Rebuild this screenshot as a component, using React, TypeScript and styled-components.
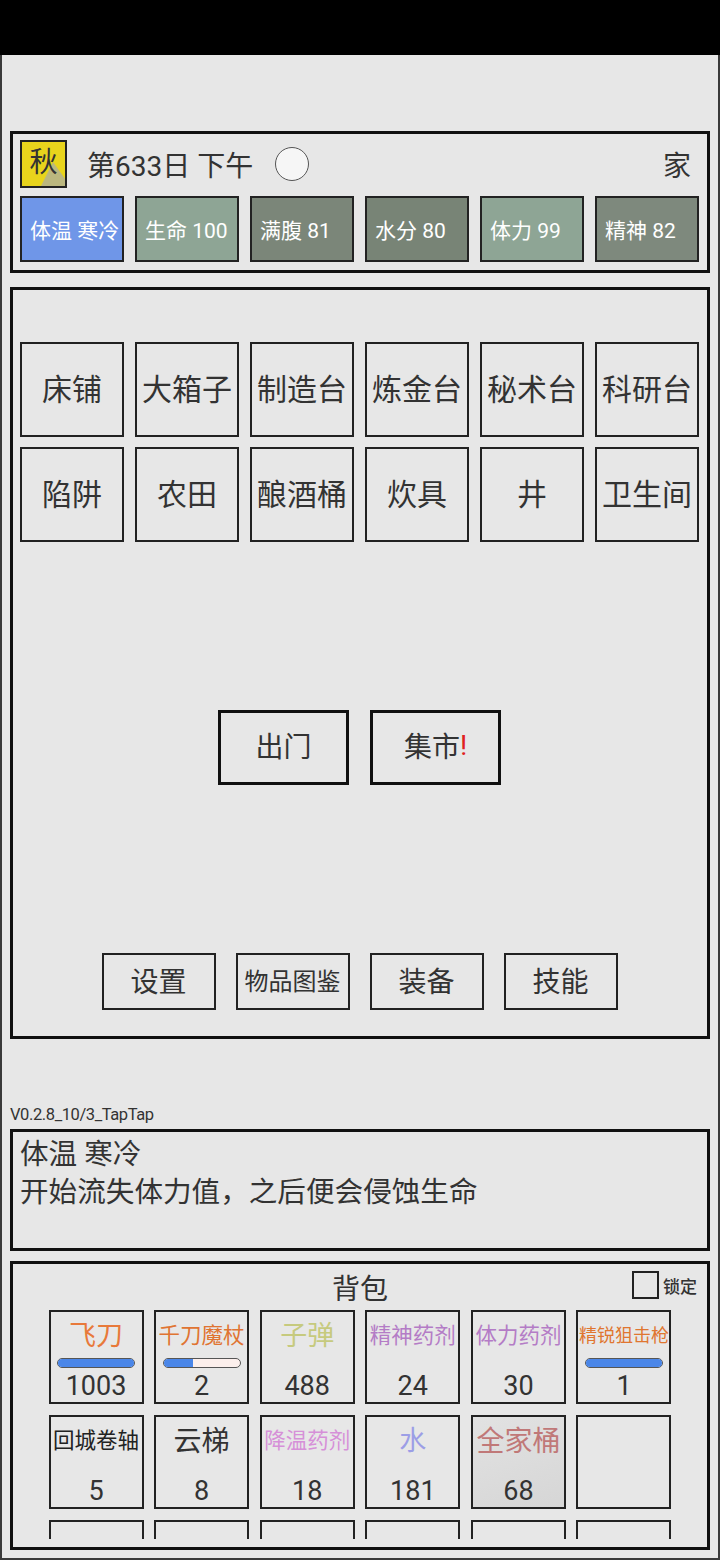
import * as React from 'react';
import styled, { createGlobalStyle } from 'styled-components';

const GlobalStyle = createGlobalStyle`
    html, body {
        margin: 0;
        padding: 0;
        background: #e7e7e7;
    }
    body {
        font-family: Roboto, "Noto Sans CJK SC", sans-serif;
        color: #333;
    }
    * {
        box-sizing: border-box;
    }
`;

const Screen = styled.div`
    width: 720px;
    height: 1560px;
    display: flex;
    flex-direction: column;
    background: #e7e7e7;
    overflow: hidden;
`;

const StatusBar = styled.div`
    height: 55px;
    flex-shrink: 0;
    background: #000;
`;

const Frame = styled.div`
    flex: 1;
    display: flex;
    flex-direction: column;
    border: 2px solid #3a3a3a;
    border-top: none;
    padding: 0 8px;
`;

const Panel = styled.section<{ $h: number; $mt: number }>`
    flex-shrink: 0;
    height: ${p => p.$h}px;
    margin-top: ${p => p.$mt}px;
    border: 3px solid #111;
    display: flex;
    flex-direction: column;
`;

/* ---- header: season, day, stats ---- */

const HeaderPanel = styled(Panel)`
    padding: 6px 8px 0 7px;
`;

const TopRow = styled.div`
    height: 48px;
    display: flex;
    align-items: center;
`;

const Season = styled.div`
    position: relative;
    width: 47px;
    height: 48px;
    border: 2px solid #222;
    background: #e8d41c;
    font-size: 28px;
    line-height: 42px;
    text-align: center;
    color: #333;
    overflow: hidden;
`;

const SeasonMark = styled.div`
    position: absolute;
    right: 0;
    bottom: 0;
    width: 24px;
    height: 24px;
    background: #bbb77f;
    clip-path: polygon(0 100%, 50% 0, 100% 70%, 100% 100%);
`;

const SeasonLabel = styled.span`
    position: relative;
`;

const DayText = styled.div`
    margin-left: 20px;
    font-size: 28px;
`;

const Sun = styled.div`
    margin-left: 22px;
    width: 34px;
    height: 34px;
    border-radius: 50%;
    border: 1.5px solid #555;
    background: #f6f6f6;
`;

const Place = styled.div`
    margin-left: auto;
    margin-right: 8px;
    font-size: 28px;
`;

const StatRow = styled.div`
    margin-top: 8px;
    display: flex;
    gap: 11px;
`;

const StatBox = styled.div<{ $bg: string }>`
    width: 104px;
    height: 66px;
    border: 2px solid #222;
    background: ${p => p.$bg};
    color: #fff;
    font-size: 21px;
    display: flex;
    align-items: center;
    padding-left: 8px;
    white-space: nowrap;
`;

/* ---- facilities ---- */

const FacilityPanel = styled(Panel)`
    padding: 52px 8px 26px 7px;
`;

const FacilityGrid = styled.div`
    display: grid;
    grid-template-columns: repeat(6, 104px);
    column-gap: 11px;
    row-gap: 10px;
`;

const Facility = styled.div`
    height: 95px;
    border: 2px solid #222;
    font-size: 30px;
    display: flex;
    align-items: center;
    justify-content: center;
    padding-bottom: 5px;
    white-space: nowrap;
`;

const Middle = styled.div`
    flex: 1;
    display: flex;
    align-items: center;
    justify-content: center;
    gap: 21px;
`;

const BigButton = styled.div`
    width: 131px;
    height: 75px;
    border: 3px solid #111;
    font-size: 28px;
    display: flex;
    align-items: center;
    justify-content: center;
    padding-bottom: 5px;
`;

const Alert = styled.span`
    color: #e02020;
`;

const MenuRow = styled.div`
    display: flex;
    justify-content: center;
    gap: 20px;
`;

const MenuButton = styled.div<{ $fs?: number }>`
    width: 114px;
    height: 57px;
    border: 2px solid #222;
    font-size: ${p => p.$fs ?? 28}px;
    display: flex;
    align-items: center;
    justify-content: center;
    padding-bottom: 4px;
    white-space: nowrap;
`;

/* ---- version + message log ---- */

const Version = styled.div`
    margin-top: 67px;
    height: 17px;
    font-size: 16.5px;
    line-height: 17px;
    color: #333;
    letter-spacing: -0.4px;
`;

const MessagePanel = styled(Panel)`
    padding: 3px 7px;
    font-size: 28.6px;
    line-height: 38px;
`;

/* ---- backpack ---- */

const BagPanel = styled(Panel)``;

const BagHeader = styled.div`
    height: 46px;
    display: grid;
    grid-template-columns: 1fr auto 1fr;
    align-items: center;
`;

const BagTitle = styled.div`
    grid-column: 2;
    font-size: 28px;
`;

const Lock = styled.label`
    justify-self: end;
    display: flex;
    align-items: center;
    gap: 4px;
    margin: -4px 10px 0 0;
    font-size: 17px;
    font-weight: 500;
`;

const LockBox = styled.span`
    width: 27px;
    height: 28px;
    border: 2px solid #222;
`;

const BagView = styled.div`
    height: 229px;
    overflow: hidden;
`;

const BagGrid = styled.div`
    display: grid;
    grid-template-columns: repeat(6, 95px);
    column-gap: 10.6px;
    row-gap: 11px;
    justify-content: center;
`;

const Cell = styled.div<{ $hl?: boolean }>`
    height: 94px;
    border: 2px solid #222;
    display: flex;
    flex-direction: column;
    align-items: center;
    background: ${p => (p.$hl ? 'linear-gradient(160deg, #e2e2e2, #d6d6d6)' : 'transparent')};
`;

const ItemName = styled.div<{ $color: string; $fs: number }>`
    height: 44px;
    display: flex;
    align-items: center;
    justify-content: center;
    font-size: ${p => p.$fs}px;
    color: ${p => p.$color};
    white-space: nowrap;
`;

const BarSlot = styled.div`
    height: 13px;
    padding-top: 3px;
`;

const Bar = styled.div`
    width: 78px;
    height: 10px;
    border: 1px solid #555;
    border-radius: 5px;
    background: #fcefec;
    overflow: hidden;
`;

const BarFill = styled.div`
    height: 100%;
    background: #4a86e8;
`;

const Count = styled.div`
    flex: 1;
    display: flex;
    align-items: center;
    padding-top: 2px;
    font-size: 27px;
`;

type Item = {
    name?: string;
    color?: string;
    fs?: number;
    bar?: number;
    count?: number;
    hl?: boolean;
};

const stats = [
    { label: '体温 寒冷', bg: '#6f96e8' },
    { label: '生命 100', bg: '#8ea595' },
    { label: '满腹 81', bg: '#7b8679' },
    { label: '水分 80', bg: '#788476' },
    { label: '体力 99', bg: '#8ea595' },
    { label: '精神 82', bg: '#7e897d' },
];

const facilities = [
    '床铺', '大箱子', '制造台', '炼金台', '秘术台', '科研台',
    '陷阱', '农田', '酿酒桶', '炊具', '井', '卫生间',
];

const items: Item[] = [
    { name: '飞刀', color: '#e8793a', fs: 27, bar: 1, count: 1003 },
    { name: '千刀魔杖', color: '#e07432', fs: 21.5, bar: 0.39, count: 2 },
    { name: '子弹', color: '#c6ca7e', fs: 27, count: 488 },
    { name: '精神药剂', color: '#b47cc6', fs: 21.5, count: 24 },
    { name: '体力药剂', color: '#b47cc6', fs: 21.5, count: 30 },
    { name: '精锐狙击枪', color: '#e07630', fs: 18, bar: 1, count: 1 },
    { name: '回城卷轴', color: '#222', fs: 21.5, count: 5 },
    { name: '云梯', color: '#333', fs: 28, count: 8 },
    { name: '降温药剂', color: '#d690d8', fs: 21.5, count: 18 },
    { name: '水', color: '#9c9ee6', fs: 27, count: 181 },
    { name: '全家桶', color: '#c07878', fs: 28, count: 68, hl: true },
    {}, {}, {}, {}, {}, {}, {},
];

const App = () => {
    return (
        <React.Fragment>
            <GlobalStyle />
            <Screen>
                <StatusBar />
                <Frame>
                    <HeaderPanel $h={142} $mt={76}>
                        <TopRow>
                            <Season>
                                <SeasonMark />
                                <SeasonLabel>秋</SeasonLabel>
                            </Season>
                            <DayText>第633日 下午</DayText>
                            <Sun />
                            <Place>家</Place>
                        </TopRow>
                        <StatRow>
                            {stats.map(s => (
                                <StatBox key={s.label} $bg={s.bg}>{s.label}</StatBox>
                            ))}
                        </StatRow>
                    </HeaderPanel>

                    <FacilityPanel $h={752} $mt={14}>
                        <FacilityGrid>
                            {facilities.map(f => (
                                <Facility key={f}>{f}</Facility>
                            ))}
                        </FacilityGrid>
                        <Middle>
                            <BigButton>出门</BigButton>
                            <BigButton>集市<Alert>!</Alert></BigButton>
                        </Middle>
                        <MenuRow>
                            <MenuButton>设置</MenuButton>
                            <MenuButton $fs={24}>物品图鉴</MenuButton>
                            <MenuButton>装备</MenuButton>
                            <MenuButton>技能</MenuButton>
                        </MenuRow>
                    </FacilityPanel>

                    <Version>V0.2.8_10/3_TapTap</Version>

                    <MessagePanel $h={122} $mt={6}>
                        <div>体温 寒冷</div>
                        <div>开始流失体力值，之后便会侵蚀生命</div>
                    </MessagePanel>

                    <BagPanel $h={289} $mt={10}>
                        <BagHeader>
                            <BagTitle>背包</BagTitle>
                            <Lock>
                                <LockBox />
                                锁定
                            </Lock>
                        </BagHeader>
                        <BagView>
                            <BagGrid>
                                {items.map((it, i) => (
                                    <Cell key={i} $hl={it.hl}>
                                        {it.name && (
                                            <React.Fragment>
                                                <ItemName $color={it.color!} $fs={it.fs!}>{it.name}</ItemName>
                                                <BarSlot>
                                                    {it.bar !== undefined && (
                                                        <Bar>
                                                            <BarFill style={{ width: `${it.bar * 100}%` }} />
                                                        </Bar>
                                                    )}
                                                </BarSlot>
                                                <Count>{it.count}</Count>
                                            </React.Fragment>
                                        )}
                                    </Cell>
                                ))}
                            </BagGrid>
                        </BagView>
                    </BagPanel>
                </Frame>
            </Screen>
        </React.Fragment>
    );
};

export default App;
